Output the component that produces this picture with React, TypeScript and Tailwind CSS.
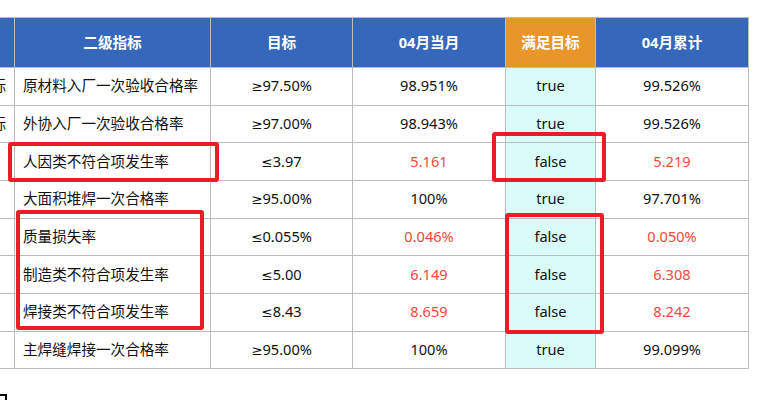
import React from "react";

type Row = {
  c0: string;
  name: string;
  target: string;
  month: string;
  ok: boolean;
  total: string;
};

const rows: Row[] = [
  { c0: "质量指标", name: "原材料入厂一次验收合格率", target: "≥97.50%", month: "98.951%", ok: true, total: "99.526%" },
  { c0: "质量指标", name: "外协入厂一次验收合格率", target: "≥97.00%", month: "98.943%", ok: true, total: "99.526%" },
  { c0: "", name: "人因类不符合项发生率", target: "≤3.97", month: "5.161", ok: false, total: "5.219" },
  { c0: "", name: "大面积堆焊一次合格率", target: "≥95.00%", month: "100%", ok: true, total: "97.701%" },
  { c0: "", name: "质量损失率", target: "≤0.055%", month: "0.046%", ok: false, total: "0.050%" },
  { c0: "", name: "制造类不符合项发生率", target: "≤5.00", month: "6.149", ok: false, total: "6.308" },
  { c0: "", name: "焊接类不符合项发生率", target: "≤8.43", month: "8.659", ok: false, total: "8.242" },
  { c0: "", name: "主焊缝焊接一次合格率", target: "≥95.00%", month: "100%", ok: true, total: "99.099%" },
];

const cell = "border border-[#bcbcbc] p-0";

export default function App() {
  return (
    <div
      className="relative w-[779px] h-[400px] overflow-hidden bg-white text-[#111] text-[14.6px]"
      style={{ fontFamily: '"Noto Sans", "Noto Sans CJK SC", sans-serif' }}
    >
      <div className="pt-[17px]">
        <table className="table-fixed border-collapse ml-[-100px] w-[848px]">
          <colgroup>
            <col className="w-[114px]" />
            <col className="w-[196px]" />
            <col className="w-[142px]" />
            <col className="w-[153px]" />
            <col className="w-[90px]" />
            <col className="w-[153px]" />
          </colgroup>
          <thead>
            <tr className="h-[50px] text-white font-bold">
              <th className={`${cell} bg-[#3568ba]`}></th>
              <th className={`${cell} bg-[#3568ba]`}>二级指标</th>
              <th className={`${cell} bg-[#3568ba]`}>目标</th>
              <th className={`${cell} bg-[#3568ba]`}>04月当月</th>
              <th className={`${cell} bg-[#e8952a]`}>满足目标</th>
              <th className={`${cell} bg-[#3568ba]`}>04月累计</th>
            </tr>
          </thead>
          <tbody>
            {rows.map((r, i) => (
              <tr key={i} className="h-[37.66px]">
                <td className={`${cell} text-right pr-[8px] whitespace-nowrap overflow-hidden`}>{r.c0}</td>
                <td className={`${cell} pl-[8px] whitespace-nowrap`}>{r.name}</td>
                <td className={`${cell} text-center`}>
                  <span style={{ fontFamily: '"DejaVu Sans", sans-serif' }} className="text-[13.5px]">
                    {r.target.charAt(0)}
                  </span>
                  {r.target.slice(1)}
                </td>
                <td className={`${cell} text-center ${r.ok ? "" : "text-[#f24a3c]"}`}>{r.month}</td>
                <td className={`${cell} text-center bg-[#dafcf8]`}>{r.ok ? "true" : "false"}</td>
                <td className={`${cell} text-center ${r.ok ? "" : "text-[#f24a3c]"}`}>{r.total}</td>
              </tr>
            ))}
          </tbody>
        </table>
        <div className="mt-[25px] w-[7px] h-[8px] border-t-2 border-r-2 border-black"></div>
      </div>

      {/* red annotation boxes */}
      <div className="absolute left-[8px] top-[142px] w-[211px] h-[40px] border-[4.5px] border-[#ec1c26] rounded-[3px]"></div>
      <div className="absolute left-[492px] top-[132px] w-[114px] h-[50px] border-[4.5px] border-[#ec1c26] rounded-[3px]"></div>
      <div className="absolute left-[16px] top-[210px] w-[188px] h-[120px] border-[4.5px] border-[#ec1c26] rounded-[3px]"></div>
      <div className="absolute left-[505px] top-[213px] w-[99px] h-[121px] border-[4.5px] border-[#ec1c26] rounded-[3px]"></div>
    </div>
  );
}
